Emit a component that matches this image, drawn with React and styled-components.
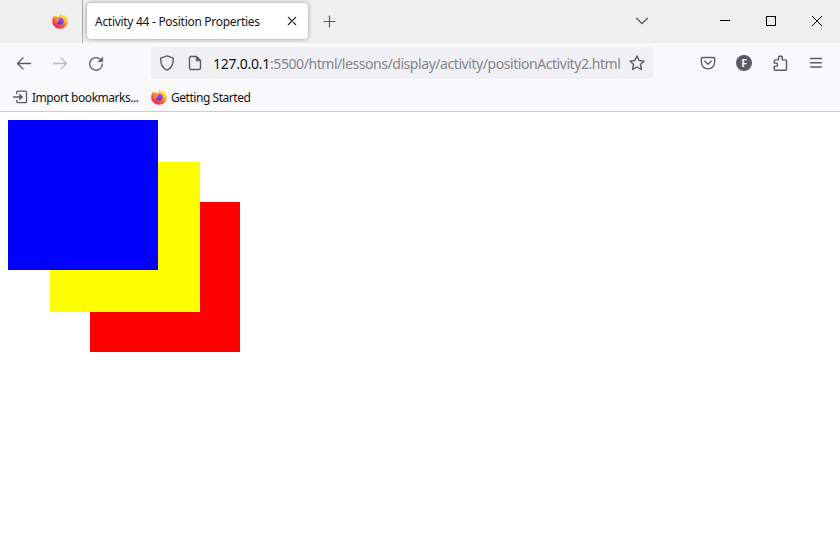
import React from "react";
import styled, { createGlobalStyle } from "styled-components";

const GlobalStyle = createGlobalStyle`
  * { box-sizing: border-box; }
  body { margin: 0; background: #fff; overflow: hidden; }
`;

const Window = styled.div`
  width: 840px;
  height: 541px;
  display: flex;
  flex-direction: column;
  background: #fff;
  color: #15141a;
  font-family: "Noto Sans", "Open Sans", sans-serif;
`;

const TabStrip = styled.header`
  display: flex;
  height: 43px;
  flex: none;
  background: #efefef;
`;

const PinnedTab = styled.div`
  width: 83px;
  padding: 13px 0 0 52px;
  border-right: 1px solid #aaaaab;
`;

const Tab = styled.div`
  display: flex;
  align-items: center;
  justify-content: space-between;
  width: 221px;
  height: 36px;
  margin: 3px 0 0 4px;
  padding: 0 8px;
  border-radius: 4px;
  background: #fff;
  box-shadow: 0 0 4px rgba(0, 0, 0, 0.4);
`;

const Label = styled.span`
  font-size: 12px;
  line-height: 16px;
  padding-top: ${(p) => p.$drop || 0}px;
  white-space: nowrap;
  letter-spacing: ${(p) => p.$spacing || 0}px;
`;

const NewTab = styled.div`
  display: flex;
  padding: 14px 0 0 13px;
`;

const WindowControls = styled.div`
  display: flex;
  gap: 30px;
  margin-left: auto;
  padding: 13px 15px 0 0;
`;

const TabListButton = styled.div`
  margin-right: 37px;
  height: 16px;
`;

const NavBar = styled.nav`
  display: flex;
  align-items: center;
  height: 40px;
  flex: none;
  padding: 0 16px;
  background: #f9f9fb;
`;

const NavButtons = styled.div`
  display: flex;
  gap: 20px;
  width: 135px;
`;

const UrlBar = styled.div`
  display: flex;
  align-items: center;
  width: 502px;
  height: 32px;
  padding: 0 8px;
  border-radius: 4px;
  background: #f0f0f4;
`;

const SiteIcons = styled.div`
  display: flex;
  flex: none;
  gap: 12px;
  width: 54px;
`;

const Url = styled.span`
  flex: 1;
  min-width: 0;
  padding-top: 2px;
  color: #858489;
  font-size: 14px;
  line-height: 20px;
  white-space: nowrap;
  letter-spacing: ${(p) => p.$spacing}px;
`;

const Host = styled.span`
  color: #15141a;
  letter-spacing: -0.25px;
`;

const Actions = styled.div`
  display: flex;
  gap: 20px;
  margin-left: auto;
`;

const BookmarksBar = styled.div`
  display: flex;
  align-items: center;
  height: 29px;
  flex: none;
  padding: 0 12px;
  background: #f9f9fb;
  border-bottom: 1px solid #ccccce;
`;

const Bookmark = styled.div`
  display: flex;
  align-items: center;
  gap: 4px;
  width: ${(p) => p.$width}px;
`;

const Icon = styled.svg`
  display: block;
  flex: none;
  width: 16px;
  height: 16px;
  fill: none;
  stroke: ${(p) => p.$color || "#5b5b66"};
  stroke-width: ${(p) => p.$weight || 1.3};
  stroke-linecap: round;
  stroke-linejoin: round;
`;

const Page = styled.main`
  position: relative;
  flex: 1;
`;

const Square = styled.div`
  position: absolute;
  left: ${(p) => p.$x}px;
  top: ${(p) => p.$y}px;
  width: 150px;
  height: 150px;
  background: ${(p) => p.$color};
`;

function Glyph({ children, ...rest }) {
  return (
    <Icon viewBox="0 0 16 16" {...rest}>
      {children}
    </Icon>
  );
}

function Firefox({ id }) {
  return (
    <Icon viewBox="0 0 16 16" $color="none">
      <defs>
        <linearGradient id={`${id}-flame`} x1="0.8" y1="0.1" x2="0.25" y2="0.95">
          <stop offset="0" stopColor="#fff04a" />
          <stop offset="0.35" stopColor="#ffb52b" />
          <stop offset="0.65" stopColor="#ff5b36" />
          <stop offset="1" stopColor="#f01d70" />
        </linearGradient>
        <linearGradient id={`${id}-globe`} x1="0.7" y1="0" x2="0.3" y2="1">
          <stop offset="0" stopColor="#a545ef" />
          <stop offset="1" stopColor="#5343cd" />
        </linearGradient>
      </defs>
      <path
        fill={`url(#${id}-flame)`}
        d="M8.900 0c.2 1.400.9 2 2 2.700.6-.1 1-.3 1.200-.9 2.200 1.300 3.700 3.600 3.700 6.500 0 4.200-3.400 7.500-7.700 7.500C3.700 15.800.2 12.500.2 8.300c0-2.400.7-4.600 2.100-5.800 0 .7.200 1.200.5 1.600.3-.7.900-1.300 1.600-1.700 0 .8.500 1.400 1.200 1.600.5-.2 1-.2 1.500-.1C7.300 2.500 7.900 1 8.900 0z"
      />
      <circle cx="8.200" cy="8.200" r="3.500" fill={`url(#${id}-globe)`} />
      <path fill="#ff8f2c" d="M3.200 5.400c1-.9 2.100-1.100 3.200-.5.600.3 1.200.7 2 .8-.2.900-1 1-1.800 1.300-.6.400-.5 1.100.1 1.700-1.600-.2-2.600.5-2.500 1.500C3 8.800 2.600 7 3.200 5.400z" />
    </Icon>
  );
}

export default function App() {
  return (
    <>
      <GlobalStyle />
      <Window>
        <TabStrip>
          <PinnedTab>
            <Firefox id="pinned" />
          </PinnedTab>
          <Tab>
            <Label $spacing={-0.29} $drop={2}>Activity 44 - Position Properties</Label>
            <Glyph $color="#15141a" $weight={1.2}>
              <path d="M4.300 4.300l7.400 7.400M11.700 4.300l-7.400 7.400" />
            </Glyph>
          </Tab>
          <NewTab>
            <Glyph $weight={1.2}>
              <path d="M8.500 2v11M3 7.500h11" />
            </Glyph>
          </NewTab>
          <WindowControls>
            <TabListButton>
              <Glyph>
                <path d="M2.500 5.200l5.500 5.300 5.500-5.300" />
              </Glyph>
            </TabListButton>
            <Glyph $color="#000" $weight={1} shapeRendering="crispEdges">
              <path d="M3.500 7.500h9" />
            </Glyph>
            <Glyph $color="#000" $weight={1} shapeRendering="crispEdges">
              <path d="M3.500 3.500h9v9h-9z" />
            </Glyph>
            <Glyph $color="#000" $weight={1}>
              <path d="M3.300 3.300l9.400 9.400M12.700 3.300l-9.400 9.400" />
            </Glyph>
          </WindowControls>
        </TabStrip>

        <NavBar>
          <NavButtons>
            <Glyph>
              <path d="M14.500 8.500H1.500M7 3L1.500 8.500 7 14" />
            </Glyph>
            <Glyph $color="#bdbdc2">
              <path d="M1.500 8.500h13M9 3l5.500 5.500L9 14" />
            </Glyph>
            <Glyph>
              <path d="M12.600 4.600A6.300 6.300 0 1 0 14.300 9" />
              <path d="M14.700 2.300v4.400h-4.400z" fill="#5b5b66" strokeWidth="0.6" />
            </Glyph>
          </NavButtons>
          <UrlBar>
            <SiteIcons>
              <Glyph $weight={1.4}>
                <path d="M8 .9l6.300 2.300c.4 5.300-1.400 9.500-6.300 12C3.100 12.700 1.300 8.500 1.700 3.200z" />
              </Glyph>
              <Glyph $weight={1.4}>
                <path d="M4 1.500h5.500l4 4V13a1.500 1.500 0 0 1-1.500 1.500H4A1.500 1.500 0 0 1 2.500 13V3A1.500 1.500 0 0 1 4 1.500z" />
                <path d="M9.200 1.500v4.300h4.300z" fill="#5b5b66" strokeWidth="0.8" />
              </Glyph>
            </SiteIcons>
            <Url $spacing={-0.44}>
              <Host>127.0.0.1</Host>:5500/html/lessons/display/activity/positionActivity2.html
            </Url>
            <Glyph $weight={1.4}>
              <path d="M8 .9l2.100 4.600 5 .6-3.700 3.400 1 5L8 12l-4.400 2.500 1-5L.9 6.100l5-.6z" />
            </Glyph>
          </UrlBar>
          <Actions>
            <Glyph $weight={1.4}>
              <path d="M2.600 2.500h10.800c.7 0 1.200.5 1.200 1.200V7.300a6.600 6.600 0 0 1-13.200 0V3.700c0-.7.5-1.200 1.200-1.200z" />
              <path d="M4.800 6.300L8 9.300l3.200-3" />
            </Glyph>
            <Glyph>
              <circle cx="8" cy="8" r="8" fill="#5b5b66" stroke="none" />
              <text x="8.200" y="12" fill="#f9f9fb" stroke="none" textAnchor="middle" fontSize="11" fontWeight="700">
                F
              </text>
            </Glyph>
            <Glyph $weight={1.4}>
              <path d="M3.200 4.900h3.300V2.900a1.900 1.900 0 0 1 3.800 0v2h3.200c.6 0 1 .4 1 1v8.300c0 .6-.4 1-1 1H3.200c-.6 0-1-.4-1-1v-2.700h1.700a1.700 1.700 0 0 0 0-3.400H2.200V5.900c0-.6.4-1 1-1z" />
            </Glyph>
            <Glyph $weight={1.4}>
              <path d="M2.500 3.500h11M2.500 7.700h11M2.500 12h11" />
            </Glyph>
          </Actions>
        </NavBar>

        <BookmarksBar>
          <Bookmark $width={139}>
            <Glyph>
              <path d="M4.700 4.500V3.300c0-.7.500-1.200 1.200-1.200h7.400c.7 0 1.200.5 1.200 1.200v9.200c0 .7-.5 1.200-1.200 1.200H5.900c-.7 0-1.200-.5-1.200-1.200v-1.200M1.500 8h8" />
              <path d="M7.800 5.200L10.800 8l-3 2.800z" fill="#5b5b66" strokeWidth="0.7" />
            </Glyph>
            <Label $spacing={-0.46} $drop={2}>Import bookmarks...</Label>
          </Bookmark>
          <Bookmark>
            <Firefox id="bookmark" />
            <Label $spacing={-0.46} $drop={2}>Getting Started</Label>
          </Bookmark>
        </BookmarksBar>

        <Page>
          <Square $x={90} $y={90} $color="#ff0000" />
          <Square $x={50} $y={50} $color="#ffff00" />
          <Square $x={8} $y={8} $color="#0000ff" />
        </Page>
      </Window>
    </>
  );
}
